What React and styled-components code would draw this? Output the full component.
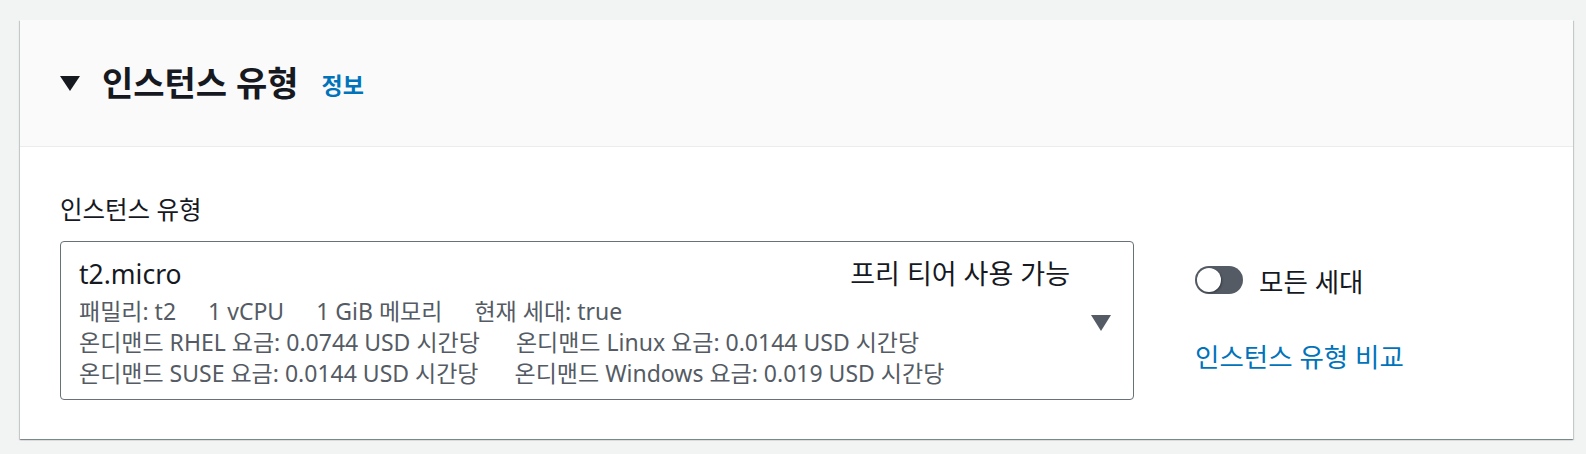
import React from "react";
import styled, { createGlobalStyle } from "styled-components";

const GlobalStyle = createGlobalStyle`
  html, body {
    margin: 0;
    padding: 0;
    background: #f2f3f3;
  }
  body {
    font-family: "Noto Sans", "Noto Sans CJK KR", sans-serif;
    color: #16191f;
  }
`;

const Page = styled.div`
  padding: 20px 13px 14px 20px;
`;

const Card = styled.section`
  background: #ffffff;
  box-shadow: 0 1px 1px 0 rgba(0, 28, 36, 0.3), 1px 1px 1px 0 rgba(0, 28, 36, 0.15),
    -1px 1px 1px 0 rgba(0, 28, 36, 0.15);
`;

const Header = styled.div`
  display: flex;
  align-items: center;
  height: 126px;
  padding: 0 40px;
  background: #fafafa;
  border-bottom: 1px solid #eaeded;
  box-sizing: content-box;
`;

const Caret = styled.svg`
  width: 20px;
  height: 15px;
  margin-right: 22px;
  flex-shrink: 0;
`;

const Title = styled.h2`
  margin: 0;
  font-size: 34px;
  line-height: 42px;
  font-weight: 700;
  color: #16191f;
`;

const InfoLink = styled.a`
  margin-left: 23px;
  font-size: 23px;
  font-weight: 700;
  color: #0073bb;
  text-decoration: none;
  line-height: 40px;
  padding-top: 4px;
`;

const Body = styled.div`
  padding: 47px 40px 39px 40px;
`;

const FieldLabel = styled.div`
  font-size: 24.5px;
  line-height: 32px;
  color: #16191f;
  margin-bottom: 15px;
`;

const FieldRow = styled.div`
  display: flex;
  align-items: flex-start;
  gap: 61px;
`;

const Select = styled.div`
  flex: 1;
  display: flex;
  align-items: center;
  border: 1px solid #687078;
  border-radius: 4px;
  padding: 14px 22px 10px 18px;
  min-width: 0;
`;

const SelectContent = styled.div`
  flex: 1;
  display: flex;
  flex-direction: column;
`;

const PrimaryRow = styled.div`
  display: flex;
  justify-content: space-between;
  align-items: center;
  line-height: 36px;
  margin-bottom: 4px;
`;

const OptionName = styled.span`
  font-size: 26.5px;
  color: #16191f;
`;

const Tag = styled.span`
  font-size: 27px;
  color: #16191f;
`;

const DetailLine = styled.div`
  display: flex;
  gap: ${(p) => p.gap}px;
  font-size: 23px;
  line-height: 31px;
  color: #545b64;
  white-space: nowrap;
`;

const ArrowIcon = styled.svg`
  width: 20px;
  height: 16px;
  margin-left: 21px;
  flex-shrink: 0;
`;

const SideColumn = styled.div`
  width: 338px;
  display: flex;
  flex-direction: column;
  padding-top: 23px;
`;

const ToggleRow = styled.label`
  display: flex;
  align-items: center;
  gap: 16px;
  height: 32px;
`;

const Track = styled.span`
  position: relative;
  width: 48px;
  height: 28px;
  border-radius: 14px;
  background: #545b64;
  flex-shrink: 0;
`;

const Knob = styled.span`
  position: absolute;
  left: 2px;
  top: 2px;
  width: 24px;
  height: 24px;
  border-radius: 50%;
  background: #ffffff;
  box-shadow: 1px 1px 2px rgba(0, 0, 0, 0.35);
`;

const ToggleText = styled.span`
  font-size: 26.5px;
  color: #16191f;
`;

const CompareLink = styled.a`
  margin-top: 44px;
  font-size: 26.5px;
  line-height: 34px;
  color: #0073bb;
  text-decoration: none;
`;

const details = [
  { gap: 32, items: ["패밀리: t2", "1 vCPU", "1 GiB 메모리", "현재 세대: true"] },
  { gap: 36, items: ["온디맨드 RHEL 요금: 0.0744 USD 시간당", "온디맨드 Linux 요금: 0.0144 USD 시간당"] },
  { gap: 36, items: ["온디맨드 SUSE 요금: 0.0144 USD 시간당", "온디맨드 Windows 요금: 0.019 USD 시간당"] },
];

export default function App() {
  return (
    <>
      <GlobalStyle />
      <Page>
        <Card>
          <Header>
            <Caret viewBox="0 0 20 15">
              <polygon points="0,0 20,0 10,15" fill="#16191f" />
            </Caret>
            <Title>인스턴스 유형</Title>
            <InfoLink href="#">정보</InfoLink>
          </Header>
          <Body>
            <FieldLabel>인스턴스 유형</FieldLabel>
            <FieldRow>
              <Select>
                <SelectContent>
                  <PrimaryRow>
                    <OptionName>t2.micro</OptionName>
                    <Tag>프리 티어 사용 가능</Tag>
                  </PrimaryRow>
                  {details.map((line, i) => (
                    <DetailLine key={i} gap={line.gap}>
                      {line.items.map((t) => (
                        <span key={t}>{t}</span>
                      ))}
                    </DetailLine>
                  ))}
                </SelectContent>
                <ArrowIcon viewBox="0 0 20 16">
                  <polygon points="0,0 20,0 10,16" fill="#545b64" />
                </ArrowIcon>
              </Select>
              <SideColumn>
                <ToggleRow>
                  <Track>
                    <Knob />
                  </Track>
                  <ToggleText>모든 세대</ToggleText>
                </ToggleRow>
                <CompareLink href="#">인스턴스 유형 비교</CompareLink>
              </SideColumn>
            </FieldRow>
          </Body>
        </Card>
      </Page>
    </>
  );
}
